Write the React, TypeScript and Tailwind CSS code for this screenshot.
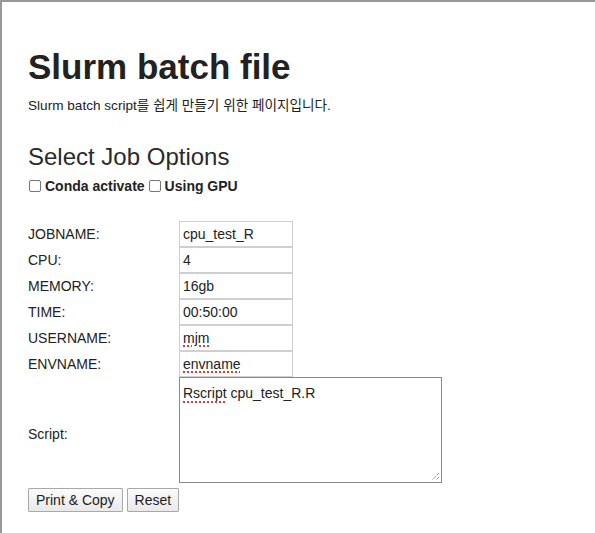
import React from "react";

const FONT = { fontFamily: '"Liberation Sans", Arial, "Noto Sans CJK KR", sans-serif' };

interface Field {
  label: string;
  value: string;
  spell?: boolean; // browser spell-check squiggle under the value
}

const FIELDS: Field[] = [
  { label: "JOBNAME:", value: "cpu_test_R" },
  { label: "CPU:", value: "4" },
  { label: "MEMORY:", value: "16gb" },
  { label: "TIME:", value: "00:50:00" },
  { label: "USERNAME:", value: "mjm", spell: true },
  { label: "ENVNAME:", value: "envname", spell: true },
];

const squiggle = "underline decoration-dotted decoration-[#e0393e] decoration-[1.5px] underline-offset-[3px]";

function Check({ label }: { label: string }) {
  return (
    <label className="flex items-center">
      <span className="ml-px mr-[4px] h-[12px] w-[12px] rounded-[2px] border border-[#767676] bg-white" />
      <span className="font-bold">{label}</span>
    </label>
  );
}

function Btn({ children }: { children: React.ReactNode }) {
  return (
    <button className="h-[24px] rounded-[1px] border border-[#a9a9a9] bg-gradient-to-b from-[#fbfbfb] to-[#e9e9e9] px-[7px] text-[14px] leading-none text-[#222]">
      {children}
    </button>
  );
}

export default function App() {
  return (
    <div
      className="min-h-[533px] w-[595px] border-l-2 border-t-2 border-[#999] bg-white pl-[26px] text-[#222]"
      style={FONT}
    >
      <h1 className="mt-[45px] text-[35px] font-bold leading-[40px]">Slurm batch file</h1>
      <p className="mt-[11px] text-[13.6px] leading-[16px]">Slurm batch script를 쉽게 만들기 위한 페이지입니다.</p>

      <h2 className="mt-[29px] text-[24px] leading-[28px] text-[#2a2a2a]">Select Job Options</h2>
      <div className="mt-[6px] flex h-[18px] items-center gap-[3px] text-[14px]">
        <Check label="Conda activate" />
        <Check label="Using GPU" />
      </div>

      <div className="mt-[26px] text-[14px]">
        {FIELDS.map((f) => (
          <div key={f.label} className="flex h-[26px] items-center">
            <div className="w-[151px]">{f.label}</div>
            <div className="flex h-[26px] w-[114px] items-center border border-[#cfcfcf] px-[3px]">
              <span className={f.spell ? squiggle : ""}>{f.value}</span>
            </div>
          </div>
        ))}
        <div className="flex h-[106px] items-center">
          <div className="w-[151px] pt-[8px]">Script:</div>
          <div className="relative h-[106px] w-[263px] border border-[#8a8a8a] px-[3px] pt-[5px]">
            <span className={squiggle}>Rscript</span> cpu_test_R.R
            <svg className="absolute bottom-[1px] right-[1px]" width="9" height="9" viewBox="0 0 9 9">
              <path d="M8 1 L1 8 M8 5 L5 8" stroke="#6b6b6b" strokeWidth="1" strokeDasharray="1 1" fill="none" />
            </svg>
          </div>
        </div>
      </div>

      <div className="mt-[5px] flex gap-[4px]">
        <Btn>Print &amp; Copy</Btn>
        <Btn>Reset</Btn>
      </div>
    </div>
  );
}
